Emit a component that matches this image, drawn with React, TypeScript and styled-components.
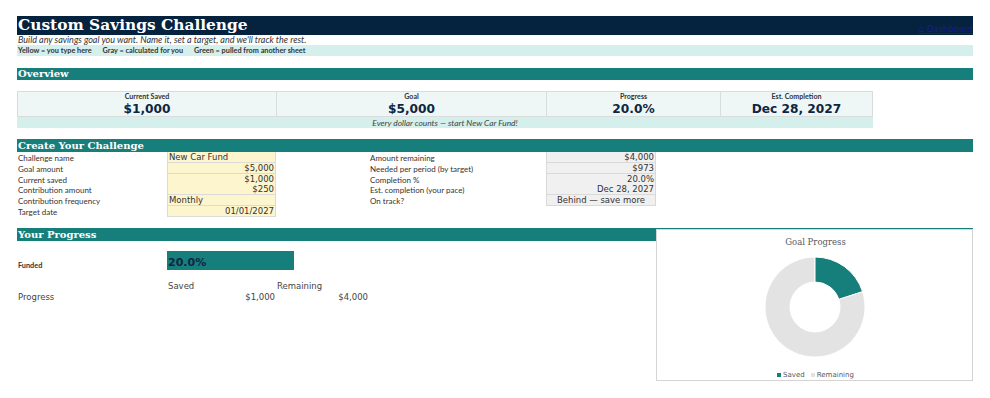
import React from "react";
import styled, { createGlobalStyle } from "styled-components";

const Global = createGlobalStyle`
  html, body { margin: 0; padding: 0; background: #fff; }
  body { font-family: Lato, "Liberation Sans", sans-serif; }
`;

const COLS = "150px 109px 93px 177px 110px 64px 153px 100px";

const Page = styled.div`
  position: relative;
  padding: 16px 0 0 17px;
  width: 956px;
  min-height: 398px;
  box-sizing: border-box;
`;

const Row = styled.div<{ $h: number }>`
  display: grid;
  grid-template-columns: ${COLS};
  height: ${(p) => p.$h}px;
`;

const Spacer = styled.div<{ $h: number }>`
  height: ${(p) => p.$h}px;
`;

const TitleBar = styled.div`
  grid-column: 1 / 9;
  background: #05223e;
  display: flex;
  align-items: center;
  justify-content: space-between;
`;

const Title = styled.h1`
  margin: 0 0 0 1px;
  font-family: "DejaVu Serif", serif;
  font-weight: bold;
  font-size: 15.4px;
  color: #fff;
  line-height: 19px;
  white-space: nowrap;
`;

const DashLink = styled.a`
  align-self: flex-end;
  font-family: "DejaVu Sans", sans-serif;
  font-size: 8.5px;
  color: #1a1a9c;
  text-decoration: underline;
  line-height: 10px;
  margin-bottom: 1px;
  white-space: nowrap;
`;

const Subtitle = styled.div`
  grid-column: 1 / 9;
  font-style: italic;
  font-size: 9px;
  color: #333;
  line-height: 10px;
  padding-left: 1px;
  white-space: nowrap;
`;

const LegendBar = styled.div`
  grid-column: 1 / 9;
  background: #d5efec;
  font-weight: bold;
  font-size: 7.3px;
  color: #333;
  display: flex;
  align-items: center;
  gap: 11px;
  padding-left: 1px;
  white-space: nowrap;
`;

const Banner = styled.div`
  grid-column: 1 / 9;
  background: #177f7b;
  color: #fff;
  font-family: "DejaVu Serif", serif;
  font-weight: bold;
  font-size: 10px;
  line-height: 12px;
  display: flex;
  align-items: flex-end;
  padding-left: 1px;
  white-space: nowrap;
`;

const OvCell = styled.div<{ $from: number; $to: number; $big?: boolean }>`
  grid-column: ${(p) => p.$from} / ${(p) => p.$to};
  background: #eef7f6;
  border-left: 1px solid #d8dddc;
  border-bottom: 1px solid #d8dddc;
  border-top: ${(p) => (p.$big ? "none" : "1px solid #d8dddc")};
  &:last-child { border-right: 1px solid #d8dddc; }
  display: flex;
  align-items: center;
  justify-content: center;
  font-family: ${(p) => (p.$big ? `"DejaVu Sans", sans-serif` : `Lato, sans-serif`)};
  font-weight: bold;
  font-size: ${(p) => (p.$big ? "12.2px" : "7.1px")};
  color: ${(p) => (p.$big ? "#0f2642" : "#333")};
  white-space: nowrap;
`;

const OvNote = styled.div`
  grid-column: 1 / 8;
  background: #d5efec;
  font-style: italic;
  font-size: 8.4px;
  color: #444;
  display: flex;
  align-items: center;
  justify-content: center;
  white-space: nowrap;
`;

const Label = styled.div<{ $col: number; $bold?: boolean; $align?: string }>`
  grid-column: ${(p) => p.$col};
  font-size: ${(p) => (p.$bold ? "7.3px" : "8px")};
  font-weight: ${(p) => (p.$bold ? "bold" : "normal")};
  color: #333;
  display: flex;
  align-items: ${(p) => p.$align ?? "center"};
  padding-left: 1px;
  white-space: nowrap;
`;

const Input = styled.div<{ $right?: boolean }>`
  grid-column: 2;
  background: #fdf5cd;
  border: 1px solid #dcdcd6;
  border-top: none;
  font-family: "DejaVu Sans", sans-serif;
  font-size: 8.5px;
  color: #333;
  display: flex;
  align-items: center;
  justify-content: ${(p) => (p.$right ? "flex-end" : "flex-start")};
  padding: 0 1px;
  white-space: nowrap;
`;

const Calc = styled.div<{ $center?: boolean }>`
  grid-column: 5;
  background: #f0f0f0;
  border: 1px solid #d9d9d9;
  border-top: none;
  font-family: "DejaVu Sans", sans-serif;
  font-size: 8.5px;
  color: #333;
  display: flex;
  align-items: center;
  justify-content: ${(p) => (p.$center ? "center" : "flex-end")};
  padding: 0 1px;
  white-space: nowrap;
`;

const Plain = styled.div<{ $col: number; $right?: boolean }>`
  grid-column: ${(p) => p.$col};
  font-family: "DejaVu Sans", sans-serif;
  font-size: 8.5px;
  color: #444;
  display: flex;
  align-items: flex-end;
  justify-content: ${(p) => (p.$right ? "flex-end" : "flex-start")};
  padding: 0 1px;
  white-space: nowrap;
`;

const BarCell = styled.div`
  grid-column: 2 / 4;
  display: flex;
`;

const Bar = styled.div`
  background: #177f7b;
  height: 100%;
  display: flex;
  align-items: flex-end;
  font-family: "DejaVu Sans", sans-serif;
  font-weight: bold;
  font-size: 11px;
  color: #0f2642;
  padding-left: 1px;
  line-height: 14px;
  box-sizing: border-box;
`;

const ChartBox = styled.div`
  position: absolute;
  left: 656px;
  top: 229px;
  width: 317px;
  height: 152px;
  box-sizing: border-box;
  border: 1px solid #d4d4d4;
  background: #fff;
  display: flex;
  flex-direction: column;
  align-items: center;
`;

const ChartTitle = styled.div`
  font-family: "DejaVu Serif", serif;
  font-size: 8.5px;
  color: #595959;
  margin-top: 7px;
  margin-left: 2px;
`;

const ChartLegend = styled.div`
  display: flex;
  gap: 6px;
  font-family: "DejaVu Sans", sans-serif;
  font-size: 7px;
  color: #595959;
  margin-top: 9px;
  margin-left: 2px;
`;

const LegendItem = styled.span<{ $c: string }>`
  display: flex;
  align-items: center;
  gap: 2px;
  &::before {
    content: "";
    width: 4px;
    height: 4px;
    background: ${(p) => p.$c};
  }
`;

function Donut() {
  const cx = 60, cy = 55, R = 50, r = 25;
  const frac = 0.2;
  const a = frac * Math.PI * 2;
  const p = (rad: number, ang: number) => [cx + rad * Math.sin(ang), cy - rad * Math.cos(ang)];
  const [x1, y1] = p(R, 0);
  const [x2, y2] = p(R, a);
  const [x3, y3] = p(r, a);
  const [x4, y4] = p(r, 0);
  const saved = `M${x1},${y1} A${R},${R} 0 0 1 ${x2},${y2} L${x3},${y3} A${r},${r} 0 0 0 ${x4},${y4} Z`;
  const rem = `M${x2},${y2} A${R},${R} 0 1 1 ${x1},${y1} L${x4},${y4} A${r},${r} 0 1 0 ${x3},${y3} Z`;
  return (
    <svg width="120" height="110" viewBox="0 0 120 110" style={{ marginTop: 5 }}>
      <path d={rem} fill="#e3e3e3" stroke="#fff" strokeWidth="1" />
      <path d={saved} fill="#177f7b" stroke="#fff" strokeWidth="1" />
    </svg>
  );
}

export default function App() {
  return (
    <>
      <Global />
      <Page>
        <Row $h={19}>
          <TitleBar>
            <Title>Custom Savings Challenge</Title>
            <DashLink href="#">⌂ Dashboard</DashLink>
          </TitleBar>
        </Row>
        <Row $h={10}>
          <Subtitle>Build any savings goal you want. Name it, set a target, and we'll track the rest.</Subtitle>
        </Row>
        <Row $h={11}>
          <LegendBar>
            <span>Yellow = you type here</span>
            <span>Gray = calculated for you</span>
            <span>Green = pulled from another sheet</span>
          </LegendBar>
        </Row>
        <Spacer $h={12} />
        <Row $h={12}>
          <Banner>Overview</Banner>
        </Row>
        <Spacer $h={11} />
        <Row $h={10}>
          <OvCell $from={1} $to={3}>Current Saved</OvCell>
          <OvCell $from={3} $to={5}>Goal</OvCell>
          <OvCell $from={5} $to={7}>Progress</OvCell>
          <OvCell $from={7} $to={8}>Est. Completion</OvCell>
        </Row>
        <Row $h={16}>
          <OvCell $from={1} $to={3} $big>$1,000</OvCell>
          <OvCell $from={3} $to={5} $big>$5,000</OvCell>
          <OvCell $from={5} $to={7} $big>20.0%</OvCell>
          <OvCell $from={7} $to={8} $big>Dec 28, 2027</OvCell>
        </Row>
        <Row $h={11}>
          <OvNote>Every dollar counts — start New Car Fund!</OvNote>
        </Row>
        <Spacer $h={11} />
        <Row $h={13}>
          <Banner>Create Your Challenge</Banner>
        </Row>
        <Row $h={11}>
          <Label $col={1}>Challenge name</Label>
          <Input>New Car Fund</Input>
          <Label $col={4}>Amount remaining</Label>
          <Calc>$4,000</Calc>
        </Row>
        <Row $h={11}>
          <Label $col={1}>Goal amount</Label>
          <Input $right>$5,000</Input>
          <Label $col={4}>Needed per period (by target)</Label>
          <Calc>$973</Calc>
        </Row>
        <Row $h={10}>
          <Label $col={1}>Current saved</Label>
          <Input $right>$1,000</Input>
          <Label $col={4}>Completion %</Label>
          <Calc>20.0%</Calc>
        </Row>
        <Row $h={11}>
          <Label $col={1}>Contribution amount</Label>
          <Input $right>$250</Input>
          <Label $col={4}>Est. completion (your pace)</Label>
          <Calc>Dec 28, 2027</Calc>
        </Row>
        <Row $h={11}>
          <Label $col={1}>Contribution frequency</Label>
          <Input>Monthly</Input>
          <Label $col={4}>On track?</Label>
          <Calc $center>Behind — save more</Calc>
        </Row>
        <Row $h={11}>
          <Label $col={1}>Target date</Label>
          <Input $right>01/01/2027</Input>
        </Row>
        <Spacer $h={11} />
        <Row $h={13}>
          <Banner>Your Progress</Banner>
        </Row>
        <Spacer $h={10} />
        <Row $h={19}>
          <Label $col={1} $bold $align="flex-end">Funded</Label>
          <BarCell>
            <Bar style={{ width: 127 }}>20.0%</Bar>
          </BarCell>
        </Row>
        <Spacer $h={10} />
        <Row $h={11}>
          <Plain $col={2}>Saved</Plain>
          <Plain $col={3}>Remaining</Plain>
        </Row>
        <Row $h={11}>
          <Plain $col={1}>Progress</Plain>
          <Plain $col={2} $right>$1,000</Plain>
          <Plain $col={3} $right>$4,000</Plain>
        </Row>
        <ChartBox>
          <ChartTitle>Goal Progress</ChartTitle>
          <Donut />
          <ChartLegend>
            <LegendItem $c="#177f7b">Saved</LegendItem>
            <LegendItem $c="#e3e3e3">Remaining</LegendItem>
          </ChartLegend>
        </ChartBox>
      </Page>
    </>
  );
}
